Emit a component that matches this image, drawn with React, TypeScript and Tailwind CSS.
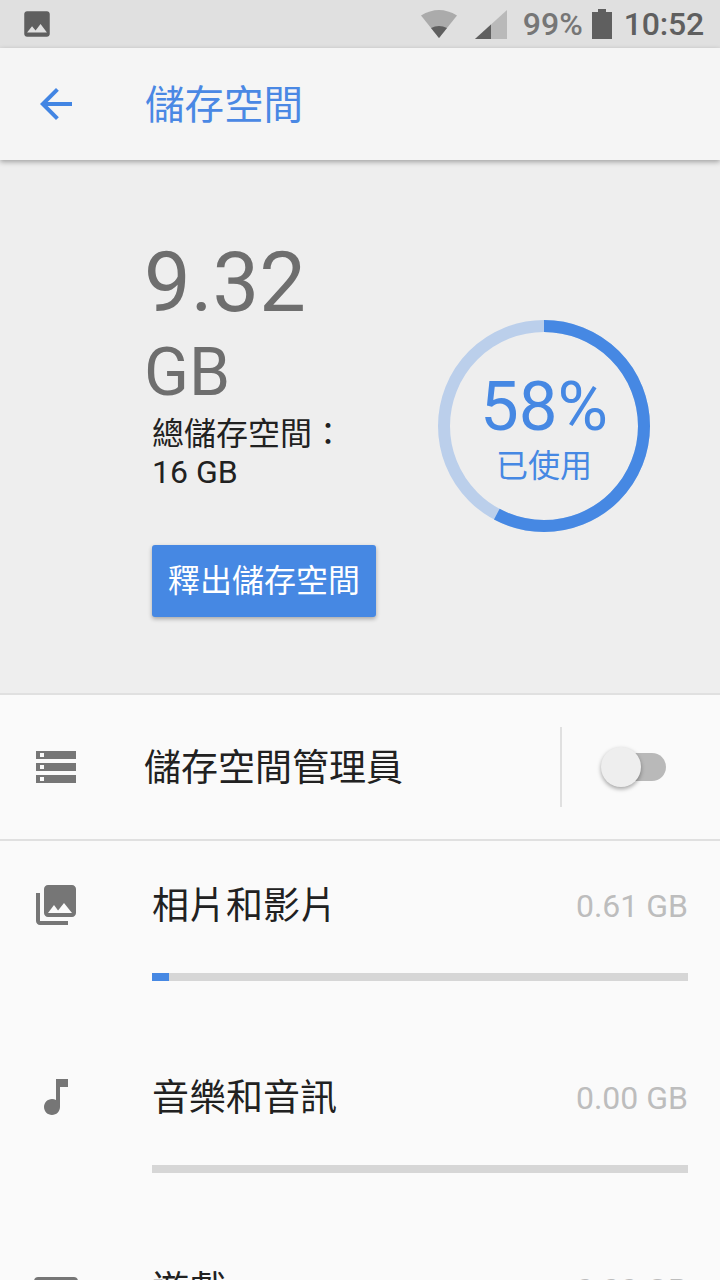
import type { ReactNode } from 'react';

const FONT = "font-['Roboto','Noto_Sans_CJK_TC',sans-serif]";

const StatusBar = () => (
  <div className="h-12 shrink-0 bg-[#e0e0e0] flex items-center pl-[20px] pr-[16px]">
    <svg width="34" height="34" viewBox="0 0 24 24">
      <path
        d="M21 19V5c0-1.100-.9-2-2-2H5c-1.100 0-2 .9-2 2v14c0 1.100.9 2 2 2h14c1.100 0 2-.9 2-2zM8.500 13.500l2.500 3.010L14.500 12l4.500 6H5l3.500-4.500z"
        fill="#5f5f5f"
      />
    </svg>
    <div className="ml-auto flex items-center">
      <svg width="36" height="28" viewBox="0 0 36 28">
        <path d="M0 5.500Q18-5.500 36 5.500L18 28z" fill="#ababab" />
        <path d="M10 18Q18 14 26 18L18 28z" fill="#5f5f5f" />
      </svg>
      <svg width="32" height="29" viewBox="0 0 32 29" className="ml-[18px]">
        <path d="M0 29L32 0v29z" fill="#b9b9b9" />
        <path d="M0 29L16 14.500V29z" fill="#5f5f5f" />
      </svg>
      <span className="ml-[16px] text-[32px] leading-none font-medium text-[#767676]">99%</span>
      <svg width="20" height="30" viewBox="0 0 20 30" className="ml-[9px]">
        <path d="M6 0h8v3h6v27H0V3h6z" fill="#5f5f5f" />
      </svg>
      <span className="ml-[12px] text-[32px] leading-none font-medium tracking-[-0.2px] text-[#5f5f5f]">10:52</span>
    </div>
  </div>
);

const AppBar = () => (
  <div className="relative z-10 h-[112px] shrink-0 bg-[#f5f5f5] shadow-[0_2px_5px_rgba(0,0,0,0.32)] flex items-center">
    <svg width="48" height="48" viewBox="0 0 24 24" className="ml-[32px]">
      <path
        d="M20 11H7.830l5.590-5.590L12 4l-8 8 8 8 1.410-1.410L7.830 13H20v-2z"
        fill="#4285e3"
      />
    </svg>
    <span className="ml-[65px] mt-[4px] text-[39.500px] leading-none text-[#4a88e4]">儲存空間</span>
  </div>
);

const Ring = () => (
  <div className="relative w-[212px] h-[212px]">
    <svg width="212" height="212" viewBox="0 0 212 212" className="-rotate-90">
      <circle cx="106" cy="106" r="100" fill="none" stroke="#bbcfeb" strokeWidth="12" />
      <circle
        cx="106"
        cy="106"
        r="100"
        fill="none"
        stroke="#4688e3"
        strokeWidth="12"
        strokeDasharray="362.8 628.3"
      />
    </svg>
    <div className="absolute inset-0 flex flex-col items-center text-[#4688e3]">
      <span className="mt-[47px] text-[69px] leading-[80px]">58%</span>
      <span className="text-[32px] leading-[38px]">已使用</span>
    </div>
  </div>
);

const Hero = () => (
  <div className="h-[535px] shrink-0 bg-[#eeeeee] border-b-2 border-[#e0e0e0] flex">
    <div className="w-[438px] shrink-0 pl-[144px] pt-[75px]">
      <div className="text-[83px] leading-[96px] text-[#6e6e6e]">9.32</div>
      <div className="mt-[2px] text-[66px] leading-[80px] text-[#6e6e6e]">GB</div>
      <div className="ml-[8px] mt-[2px] text-[32px] leading-[38px] text-[#212121]">
        總儲存空間：
        <br />
        16 GB
      </div>
      <div className="ml-[8px] mt-[54px] w-[224px] h-[72px] rounded-[3px] bg-[#4688e3] shadow-[0_2px_4px_rgba(0,0,0,0.3)] flex items-center justify-center text-[32px] text-white">
        釋出儲存空間
      </div>
    </div>
    <div className="pt-[160px]">
      <Ring />
    </div>
  </div>
);

const ManagerRow = () => (
  <div className="h-[146px] shrink-0 border-b-2 border-[#e0e0e0] flex items-center">
    <svg width="48" height="48" viewBox="0 0 24 24" className="ml-[32px]">
      <path
        d="M2 20h20v-4H2v4zm2-3h2v2H4v-2zM2 4v4h20V4H2zm4 3H4V5h2v2zm-4 7h20v-4H2v4zm2-3h2v2H4v-2z"
        fill="#767676"
      />
    </svg>
    <span className="ml-[64px] mt-[2px] text-[37px] leading-none text-[#212121]">儲存空間管理員</span>
    <div className="ml-auto h-20 w-0.5 bg-[#e0e0e0]" />
    <div className="relative w-[66px] h-10 ml-[39px] mr-[53px]">
      <div className="absolute left-[6px] right-[1px] top-[6px] h-[28px] rounded-full bg-[#b9b9b9]" />
      <div className="absolute left-0 top-0 w-10 h-10 rounded-full bg-[#eeeeee] shadow-[0_2px_4px_rgba(0,0,0,0.35)]" />
    </div>
  </div>
);

const PhotosIcon = () => (
  <svg width="48" height="48" viewBox="0 0 24 24">
    <path
      d="M22 16V4c0-1.100-.9-2-2-2H8c-1.100 0-2 .9-2 2v12c0 1.100.9 2 2 2h12c1.100 0 2-.9 2-2zm-11-4l2.030 2.710L16 11l4 5H8l3-4zM2 6v14c0 1.100.9 2 2 2h14v-2H4V6H2z"
      fill="#767676"
    />
  </svg>
);

const MusicIcon = () => (
  <svg width="48" height="48" viewBox="0 0 24 24">
    <path
      d="M12 3v10.550c-.59-.34-1.270-.55-2-.55-2.210 0-4 1.790-4 4s1.790 4 4 4 4-1.790 4-4V7h4V3h-6z"
      fill="#767676"
    />
  </svg>
);

const GamesIcon = () => (
  <svg width="48" height="48" viewBox="0 0 24 24">
    <path
      d="M21 6H3c-1.100 0-2 .9-2 2v8c0 1.100.9 2 2 2h18c1.100 0 2-.9 2-2V8c0-1.100-.9-2-2-2zm-10 7H8v3H6v-3H3v-2h3V8h2v3h3v2z"
      fill="#767676"
    />
  </svg>
);

const StorageRow = ({ icon, label, size, used }: { icon: ReactNode; label: string; size: string; used?: number }) => (
  <div className="h-[192px] shrink-0">
    <div className="flex items-start pt-[40px] pl-[32px] pr-[32px] h-[84px]">
      <div className="w-12 h-12 shrink-0">{icon}</div>
      <span className="ml-[72px] mt-[4px] text-[37px] leading-[44px] text-[#212121]">{label}</span>
      <span className="ml-auto mt-[3px] text-[32px] leading-[44px] text-[#bdbdbd]">{size}</span>
    </div>
    <div className="ml-[152px] mr-[32px] mt-[48px] h-2 bg-[#d6d6d6]">
      {used ? <div className="h-full bg-[#4688e3]" style={{ width: `${used}%` }} /> : null}
    </div>
  </div>
);

export default function App() {
  return (
    <div className={`${FONT} w-[720px] h-[1280px] overflow-hidden bg-[#fafafa] flex flex-col`}>
      <StatusBar />
      <AppBar />
      <Hero />
      <ManagerRow />
      <StorageRow icon={<PhotosIcon />} label="相片和影片" size="0.61 GB" used={3.2} />
      <StorageRow icon={<MusicIcon />} label="音樂和音訊" size="0.00 GB" />
      <StorageRow icon={<GamesIcon />} label="遊戲" size="0.00 GB" />
    </div>
  );
}
